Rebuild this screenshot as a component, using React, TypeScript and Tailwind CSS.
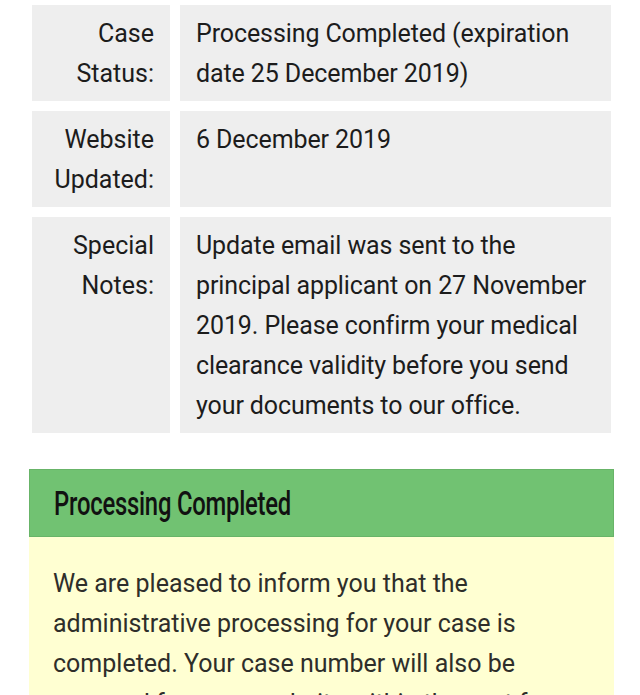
const rows = [
  { label: ["Case", "Status:"], value: "Processing Completed (expiration date 25 December 2019)" },
  { label: ["Website", "Updated:"], value: "6 December 2019" },
  {
    label: ["Special", "Notes:"],
    value:
      "Update email was sent to the principal applicant on 27 November 2019. Please confirm your medical clearance validity before you send your documents to our office.",
  },
];

export default function App() {
  return (
    <div className="min-h-[695px] bg-white font-['Roboto','Liberation_Sans',sans-serif] text-[25px] leading-[40px] text-[#1c1c1c]">
      <div className="ml-[29px] mr-[26px] pt-[5px]">
        {/* Case details table */}
        <div className="grid grid-cols-[138px_1fr] gap-[10px] px-[3px]">
          {rows.map((r) => (
            <div key={r.label[0]} className="contents">
              <div className="bg-[#eeeeee] px-4 pt-[9px] pb-[7px] text-right">
                {r.label.map((l) => (
                  <div key={l}>{l}</div>
                ))}
              </div>
              <div className="bg-[#eeeeee] px-4 pt-[9px] pb-[7px] tracking-[-0.1px]">{r.value}</div>
            </div>
          ))}
        </div>

        {/* Status panel */}
        <div className="mt-[36px]">
          <div className="flex h-[68px] items-center border border-[#68b468] bg-[#71c272] px-6">
            <h2 className="inline-block origin-left scale-x-[0.7] font-['Roboto',sans-serif] text-[34px] font-medium leading-none tracking-[-0.3px] whitespace-nowrap text-[#111]">
              Processing Completed
            </h2>
          </div>
          <div className="bg-[#ffffd2] px-6 pt-[27px] pb-6 text-[#2e2e2a]">
            We are pleased to inform you that the administrative processing for your case is completed. Your case number
            will also be removed from our website within the next few days.
          </div>
        </div>
      </div>
    </div>
  );
}
